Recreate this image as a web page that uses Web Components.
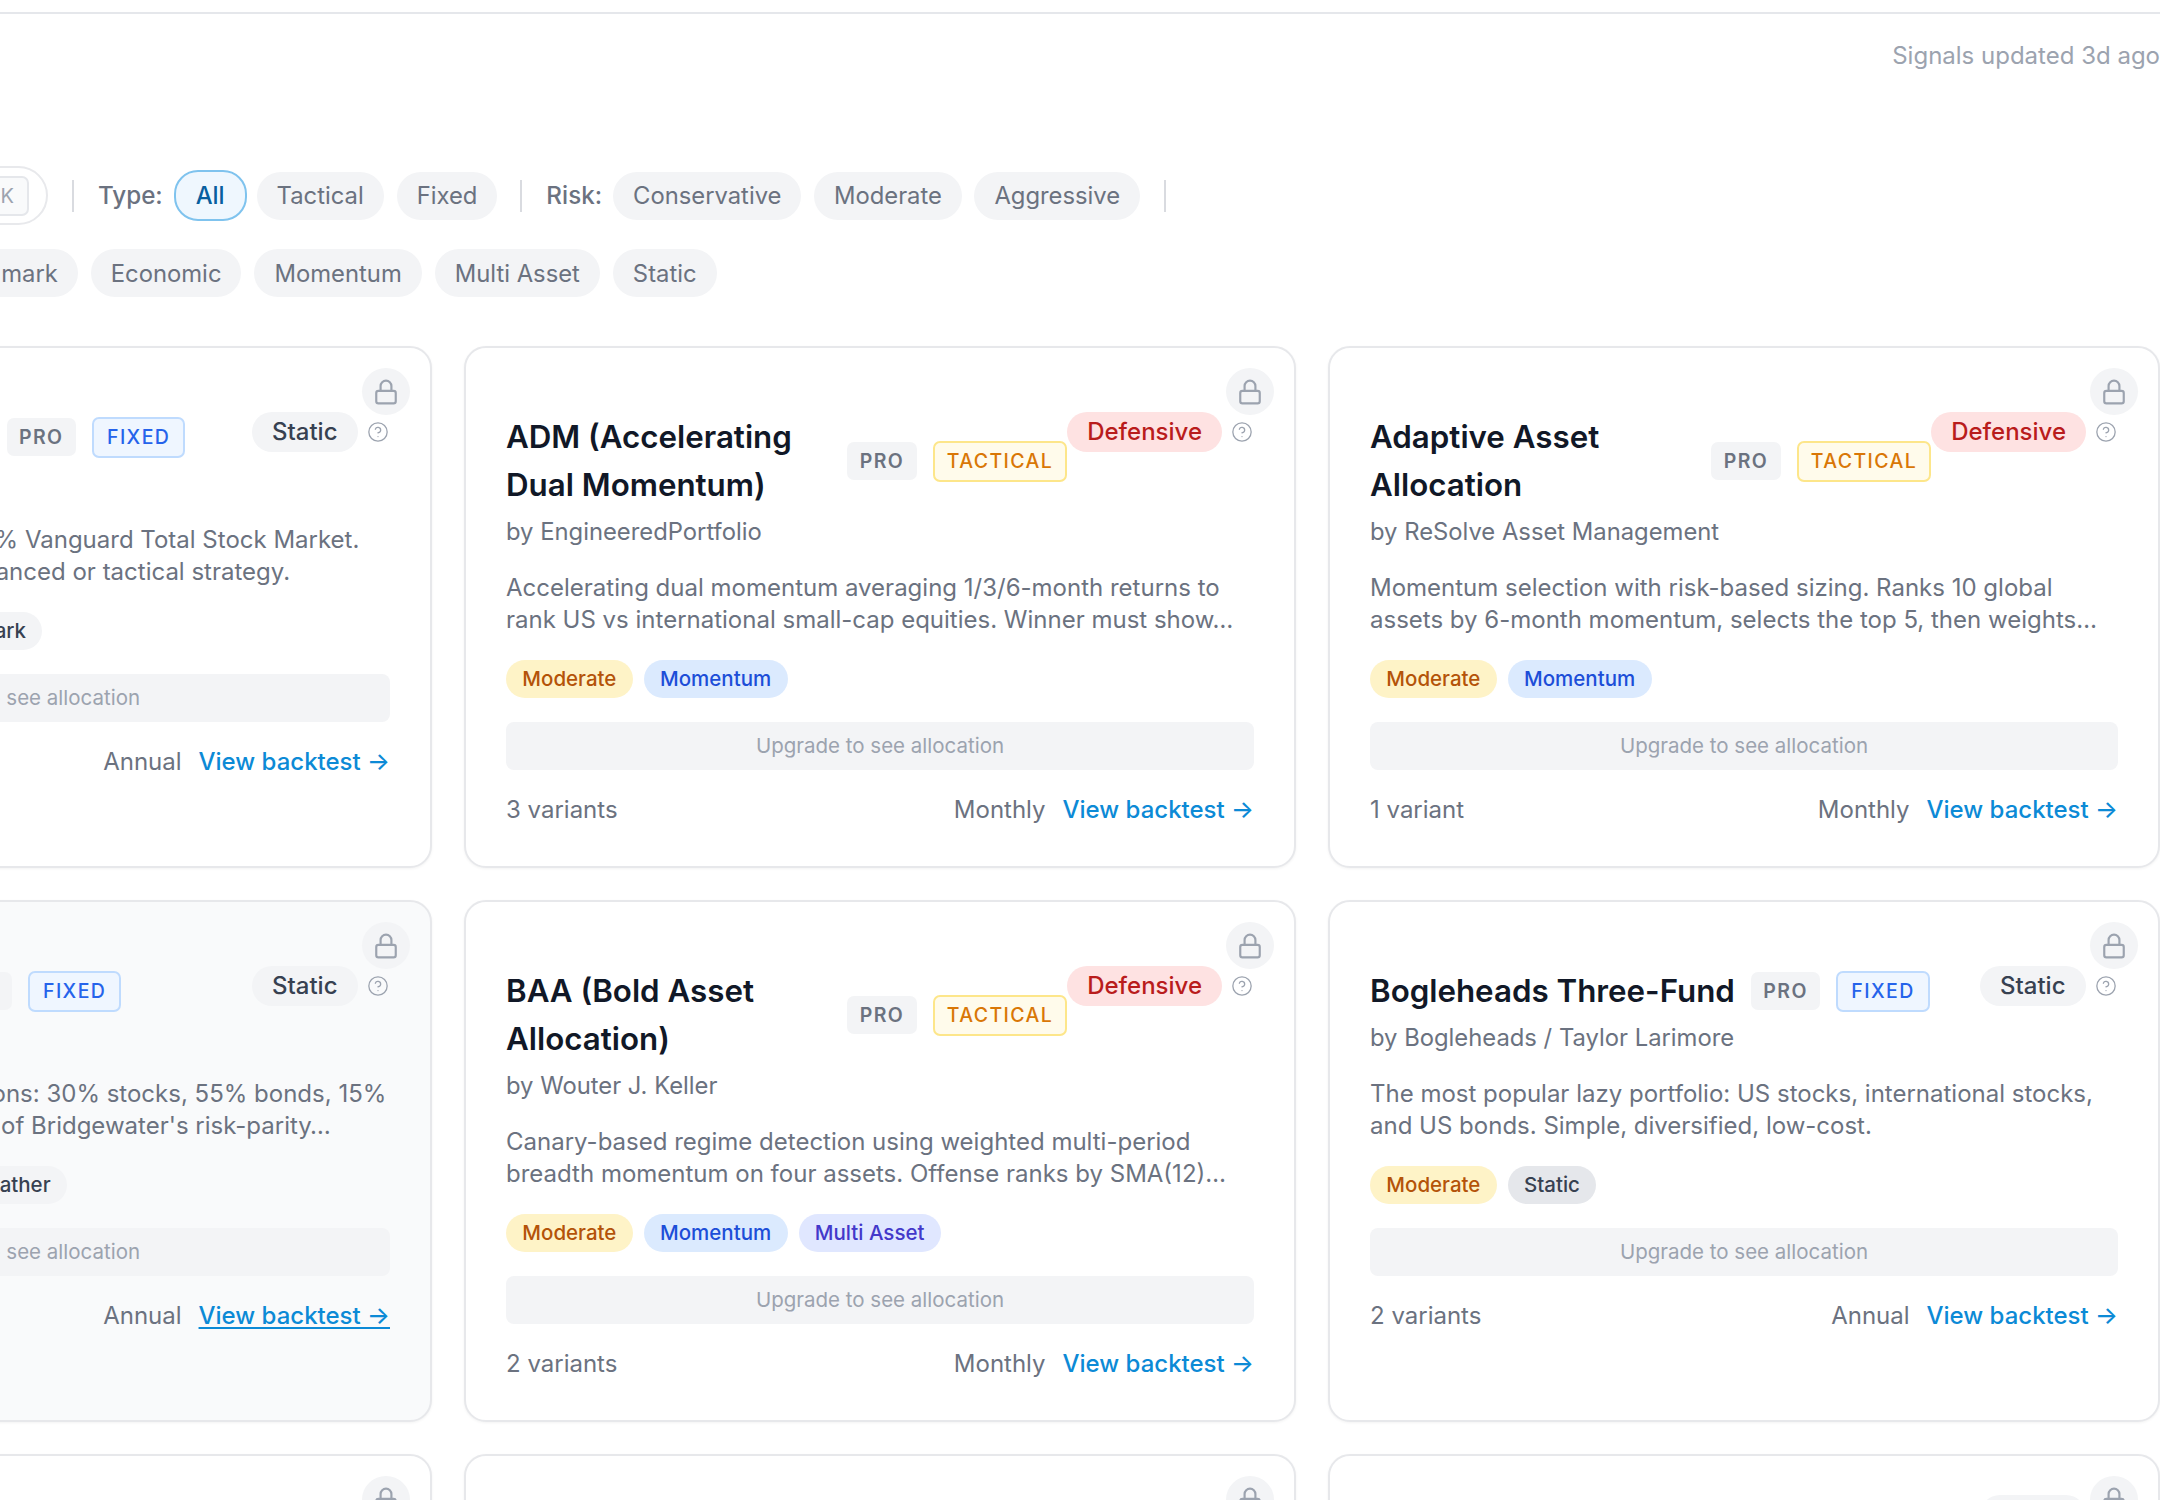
<!DOCTYPE html>
<html lang="en">
<head>
<meta charset="UTF-8">
<title>Strategies</title>
<style>
  html, body { margin: 0; padding: 0; background: #fff; overflow: hidden; width: 2160px; height: 1500px; }
  body { font-family: Inter, "Liberation Sans", sans-serif; }
</style>
</head>
<body>
<template id="filter-pill-tpl">
  <style>
    :host { display: inline-flex; align-items: center; height: 48px; padding: 0 20px; border-radius: 24px; background: #f3f4f6; color: #6b7280; font-size: 23.8px; white-space: nowrap; box-sizing: border-box; flex: none; }
    :host([active]) { height: 51px; padding: 0 20px; margin: 0 -3px 0 0; background: #eff7fe; border: 2px solid #7fc3ee; color: #075f9f; font-weight: 500; }
  </style>
  <slot></slot>
</template>

<template id="filter-bar-tpl">
  <style>
    :host { display: block; margin-left: -399px; width: 2559px; height: 180px; }
    .row { display: flex; align-items: center; height: 59px; }
    .row + .row { margin-top: 24px; height: 48px; margin-left: 309px; gap: 13px; }
    .search { flex: none; width: 447px; height: 59px; box-sizing: border-box; border: 2px solid #e8e9ec; border-radius: 30px; display: flex; align-items: center; justify-content: flex-end; padding-right: 17px; }
    .kbd { height: 40px; padding: 0 13px 0 8px; box-sizing: border-box; border: 2px solid #e5e7eb; background: #f9fafb; border-radius: 7px; color: #9ca3af; font-size: 20px; display: flex; align-items: center; }
    .sep { flex: none; width: 2px; height: 32px; background: #d9dbe0; margin: 0 24px; }
    .label { color: #6b7280; font-size: 24.2px; font-weight: 500; margin-right: 11px; flex: none; }
    .group { display: flex; align-items: center; gap: 13px; }
    .group.risk { gap: 12.5px; }
  </style>
  <div class="row">
    <div class="search"><span class="kbd">⌘K</span></div>
    <span class="sep"></span>
    <span class="label">Type:</span>
    <div class="group"><slot name="type"></slot></div>
    <span class="sep" style="margin-left:23px"></span>
    <span class="label">Risk:</span>
    <div class="group risk"><slot name="risk"></slot></div>
    <span class="sep"></span>
  </div>
  <div class="row"><slot name="category"></slot></div>
</template>

<template id="tag-pill-tpl">
  <style>
    :host { display: inline-flex; align-items: center; height: 38px; padding: 0 16.3px; border-radius: 19px; font-size: 20.5px; font-weight: 500; white-space: nowrap; box-sizing: border-box; background: #f3f4f6; color: #374151; }
    :host([tone="amber"]) { background: #fef3c7; color: #b45309; }
    :host([tone="blue"]) { background: #dbeafe; color: #1d4ed8; }
    :host([tone="indigo"]) { background: #e0e7ff; color: #4338ca; }
    :host([tone="gray"]) { background: #e5e7eb; color: #374151; }
  </style>
  <slot></slot>
</template>

<template id="kind-badge-tpl">
  <style>
    :host { display: inline-flex; align-items: center; height: 38px; padding: 0 12.5px; border-radius: 7px; font-size: 19.5px; font-weight: 600; letter-spacing: 1.4px; white-space: nowrap; box-sizing: border-box; background: #f3f4f6; color: #6b7280; flex: none; }
    :host([kind="tactical"]) { height: 41px; padding: 0 12px; border: 2px solid #fde68a; background: #fffbeb; color: #d97706; font-weight: 500; }
    :host([kind="fixed"]) { height: 41px; padding: 0 13px; border: 2px solid #bfdbfe; background: #eff6ff; color: #2563eb; font-weight: 500; }
  </style>
  <slot></slot>
</template>

<template id="strategy-card-tpl">
  <style>
    :host { display: block; position: relative; box-sizing: border-box; padding: 65px 40px 40px; border: 2px solid #e7e8eb; border-radius: 22px; background: #fff; box-shadow: 0 1px 3px rgba(0,0,0,.05); color: #6b7280; }
    :host([hovered]) { background: #f9fafb; }
    .lock { position: absolute; top: 20px; right: 20px; width: 48px; height: 47px; border-radius: 50%; background: #f3f4f6; display: flex; align-items: center; justify-content: center; }
    .lock svg { width: 26px; height: 26px; fill: none; stroke: #9ca3af; stroke-width: 2; stroke-linecap: round; stroke-linejoin: round; }
    .head { display: flex; align-items: flex-start; }
    .title-row { flex: 1; min-width: 0; display: flex; align-items: center; gap: 16px; }
    h3 { margin: 0; min-width: 0; font-size: 31.3px; line-height: 48px; font-weight: 600; color: #111827; }
    .regime-wrap { flex: none; display: flex; align-items: center; gap: 9px; margin-right: 1px; margin-top: calc(var(--regime-up, 0px) - 1.5px); }
    .regime { display: inline-flex; align-items: center; height: 40px; padding: 0 20.5px; border-radius: 20px; background: #f3f4f6; color: #374151; font-size: 24px; font-weight: 500; }
    :host([regime="Defensive"]) .regime { background: #fee2e2; color: #b91c1c; padding: 0 20px; }
    .help { width: 22px; height: 22px; fill: none; stroke: #9ca3af; stroke-width: 1.4; stroke-linecap: round; stroke-linejoin: round; flex: none; }
    .by { font-size: 23.8px; line-height: 32px; margin-top: 7px; color: #6b7280; white-space: nowrap; }
    .desc { font-size: 24px; line-height: 32px; margin-top: 23.5px; white-space: nowrap; }
    .tags { display: flex; gap: 11px; margin-top: 24px; }
    .alloc { height: 48px; margin-top: 24px; border-radius: 8px; background: #f3f4f6; color: #9ca3af; font-size: 20.5px; display: flex; align-items: center; justify-content: center; }
    .foot { display: flex; align-items: center; justify-content: space-between; margin-top: 24px; font-size: 24px; line-height: 32px; }
    .right { display: flex; gap: 17px; }
    .link { color: #0c8ad6; font-weight: 500; text-decoration: none; }
    :host([hovered]) .link { text-decoration: underline; text-underline-offset: 3px; }
  </style>
  <div class="lock"><svg viewBox="0 0 24 24"><rect x="3" y="11" width="18" height="11.5" rx="2"></rect><path d="M7 11V6.5a5 5 0 0 1 10 0V11"></path></svg></div>
  <div class="head">
    <div class="title-row">
      <h3><slot name="title"></slot></h3>
      <slot name="badges"></slot>
    </div>
    <div class="regime-wrap">
      <span class="regime"></span>
      <svg class="help" viewBox="0 0 24 24"><circle cx="12" cy="12" r="10"></circle><path d="M9.09 9a3 3 0 0 1 5.83 1c0 2-3 3-3 3"></path><path d="M12 17h.01"></path></svg>
    </div>
  </div>
  <div class="by"><slot name="by"></slot></div>
  <div class="desc"><slot name="desc"></slot></div>
  <div class="tags"><slot name="tags"></slot></div>
  <div class="alloc">Upgrade to see allocation</div>
  <div class="foot">
    <span class="variants"></span>
    <span class="right"><span class="freq"></span><a class="link" href="#">View backtest →</a></span>
  </div>
</template>

<template id="strategy-grid-tpl">
  <style>
    :host { display: grid; grid-template-columns: repeat(3, 832px); column-gap: 32px; grid-auto-rows: 522px; row-gap: 32px; margin-left: -400px; width: 2560px; }
  </style>
  <slot></slot>
</template>

<template id="page-top-tpl">
  <style>
    :host { display: block; height: 166px; box-sizing: border-box; position: relative; }
    .line { height: 12px; border-bottom: 2px solid #e5e7eb; }
    .status { text-align: right; margin-top: 28px; font-size: 24px; line-height: 28px; color: #9ca3af; }
  </style>
  <div class="line"></div>
  <div class="status"><slot></slot></div>
</template>

<page-top>Signals updated 3d ago</page-top>

<filter-bar>
  <filter-pill slot="type" active>All</filter-pill>
  <filter-pill slot="type">Tactical</filter-pill>
  <filter-pill slot="type">Fixed</filter-pill>
  <filter-pill slot="risk">Conservative</filter-pill>
  <filter-pill slot="risk">Moderate</filter-pill>
  <filter-pill slot="risk">Aggressive</filter-pill>
  <filter-pill slot="category">Benchmark</filter-pill>
  <filter-pill slot="category">Economic</filter-pill>
  <filter-pill slot="category">Momentum</filter-pill>
  <filter-pill slot="category">Multi Asset</filter-pill>
  <filter-pill slot="category">Static</filter-pill>
</filter-bar>

<strategy-grid>
  <strategy-card regime="Static" variants="1 variant" freq="Annual">
    <span slot="title" style="display:inline-block;width:348.5px;white-space:nowrap">100% US Stocks</span>
    <kind-badge slot="badges">PRO</kind-badge>
    <kind-badge slot="badges" kind="fixed">FIXED</kind-badge>
    <span slot="by">by Vanguard</span>
    <span slot="desc"><span style="margin-left:1px">The simplest benchmark is 100% Vanguard Total Stock Market.</span><br><span style="margin-left:8px">Useful to test if you need a balanced or tactical strategy.</span></span>
    <tag-pill slot="tags" tone="amber">Aggressive</tag-pill>
    <tag-pill slot="tags" tone="gray">Static</tag-pill>
    <tag-pill slot="tags" style="margin-left:3px">Benchmark</tag-pill>
  </strategy-card>

  <strategy-card regime="Defensive" variants="3 variants" freq="Monthly">
    <span slot="title">ADM (Accelerating Dual Momentum)</span>
    <kind-badge slot="badges">PRO</kind-badge>
    <kind-badge slot="badges" kind="tactical">TACTICAL</kind-badge>
    <span slot="by">by EngineeredPortfolio</span>
    <span slot="desc">Accelerating dual momentum averaging 1/3/6-month returns to<br>rank US vs international small-cap equities. Winner must show…</span>
    <tag-pill slot="tags" tone="amber">Moderate</tag-pill>
    <tag-pill slot="tags" tone="blue">Momentum</tag-pill>
  </strategy-card>

  <strategy-card regime="Defensive" variants="1 variant" freq="Monthly">
    <span slot="title">Adaptive Asset Allocation</span>
    <kind-badge slot="badges">PRO</kind-badge>
    <kind-badge slot="badges" kind="tactical">TACTICAL</kind-badge>
    <span slot="by">by ReSolve Asset Management</span>
    <span slot="desc">Momentum selection with risk-based sizing. Ranks 10 global<br>assets by 6-month momentum, selects the top 5, then weights…</span>
    <tag-pill slot="tags" tone="amber">Moderate</tag-pill>
    <tag-pill slot="tags" tone="blue">Momentum</tag-pill>
  </strategy-card>

  <strategy-card regime="Static" variants="2 variants" freq="Annual" hovered>
    <span slot="title" style="display:inline-block;width:284.5px;white-space:nowrap">All Weather</span>
    <kind-badge slot="badges">PRO</kind-badge>
    <kind-badge slot="badges" kind="fixed">FIXED</kind-badge>
    <span slot="by">by Ray Dalio</span>
    <span slot="desc"><span style="margin-left:12px">Ray Dalio's diversified allocations: 30% stocks, 55% bonds, 15%</span><br><span style="margin-left:4px">gold and commodity, a version of Bridgewater's risk-parity…</span></span>
    <tag-pill slot="tags" tone="amber">Moderate</tag-pill>
    <tag-pill slot="tags" tone="gray">Static</tag-pill>
    <tag-pill slot="tags" style="margin-left:42px">All Weather</tag-pill>
  </strategy-card>

  <strategy-card regime="Defensive" variants="2 variants" freq="Monthly">
    <span slot="title">BAA (Bold Asset Allocation)</span>
    <kind-badge slot="badges">PRO</kind-badge>
    <kind-badge slot="badges" kind="tactical">TACTICAL</kind-badge>
    <span slot="by">by Wouter J. Keller</span>
    <span slot="desc">Canary-based regime detection using weighted multi-period<br>breadth momentum on four assets. Offense ranks by SMA(12)…</span>
    <tag-pill slot="tags" tone="amber">Moderate</tag-pill>
    <tag-pill slot="tags" tone="blue">Momentum</tag-pill>
    <tag-pill slot="tags" tone="indigo">Multi Asset</tag-pill>
  </strategy-card>

  <strategy-card regime="Static" variants="2 variants" freq="Annual">
    <span slot="title">Bogleheads Three-Fund</span>
    <kind-badge slot="badges">PRO</kind-badge>
    <kind-badge slot="badges" kind="fixed">FIXED</kind-badge>
    <span slot="by">by Bogleheads / Taylor Larimore</span>
    <span slot="desc">The most popular lazy portfolio: US stocks, international stocks,<br>and US bonds. Simple, diversified, low-cost.</span>
    <tag-pill slot="tags" tone="amber">Moderate</tag-pill>
    <tag-pill slot="tags" tone="gray">Static</tag-pill>
  </strategy-card>

  <strategy-card regime=""></strategy-card>
  <strategy-card regime=""></strategy-card>
  <strategy-card regime="Static" style="--regime-up:-25px"></strategy-card>
</strategy-grid>

<script>
  // every element just clones its template into an open shadow root
  function fromTemplate(id) {
    return class extends HTMLElement {
      constructor() {
        super();
        this.attachShadow({ mode: 'open' }).appendChild(document.getElementById(id).content.cloneNode(true));
      }
    };
  }

  customElements.define('page-top', fromTemplate('page-top-tpl'));
  customElements.define('filter-bar', fromTemplate('filter-bar-tpl'));
  customElements.define('filter-pill', fromTemplate('filter-pill-tpl'));
  customElements.define('tag-pill', fromTemplate('tag-pill-tpl'));
  customElements.define('kind-badge', fromTemplate('kind-badge-tpl'));
  customElements.define('strategy-grid', fromTemplate('strategy-grid-tpl'));

  class StrategyCard extends fromTemplate('strategy-card-tpl') {
    connectedCallback() {
      const root = this.shadowRoot;
      const regime = this.getAttribute('regime') || '';
      root.querySelector('.regime').textContent = regime;
      root.querySelector('.variants').textContent = this.getAttribute('variants') || '';
      root.querySelector('.freq').textContent = this.getAttribute('freq') || '';
      if (!regime) root.querySelector('.regime-wrap').style.visibility = 'hidden';
    }
  }
  customElements.define('strategy-card', StrategyCard);
</script>
</body>
</html>
